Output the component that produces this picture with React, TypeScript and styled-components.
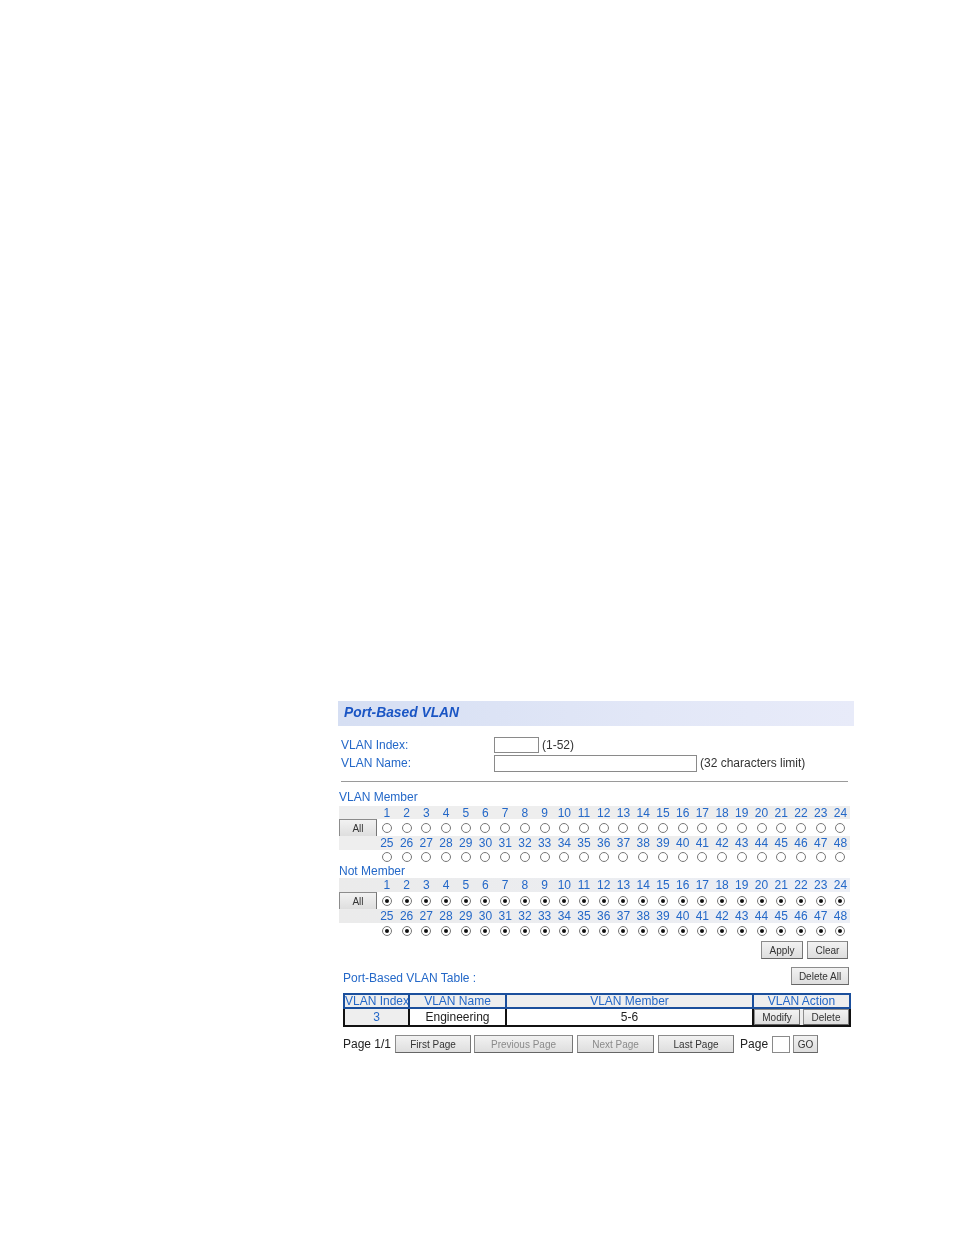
import React from 'react';
import styled, { createGlobalStyle } from 'styled-components';

const Global = createGlobalStyle`
  html, body { margin: 0; padding: 0; background: #fff; }
  body { font-family: "Liberation Sans", Arial, sans-serif; }
`;

const blue = '#2468c8';

const Page = styled.div`
  width: 954px;
  height: 1235px;
  box-sizing: border-box;
  padding: 701px 100px 0 338px;
  overflow: hidden;
`;
const Panel = styled.main`
  width: 516px;
  display: flex;
  flex-direction: column;
  filter: blur(0.3px);
`;
const TitleBar = styled.h1`
  margin: 0;
  height: 25px;
  box-sizing: border-box;
  padding: 0 0 3px 6px;
  display: flex;
  align-items: center;
  background: linear-gradient(90deg, #d6dff3 0%, #e2e7f7 60%, #e8ebf9 100%);
  color: #1a55c4;
  font-size: 13.8px;
  font-weight: bold;
  font-style: italic;
`;
const FormRow = styled.div<{ $top: number }>`
  display: flex;
  align-items: center;
  margin-top: ${p => p.$top}px;
  padding-left: 3px;
  font-size: 12px;
  height: 16px;
`;
const FieldLabel = styled.label`
  width: 153px;
  color: ${blue};
`;
const TextBox = styled.div<{ $w: number; $h: number }>`
  width: ${p => p.$w}px;
  height: ${p => p.$h}px;
  box-sizing: border-box;
  border: 1px solid #8a8a8a;
  background: #fff;
`;
const Hint = styled.span`
  margin-left: 3px;
  color: #333;
`;
const Rule = styled.hr`
  margin: 10px 6px 0 3px;
  border: 0;
  height: 1px;
  background: #9a9a9a;
`;
const SectionLabel = styled.div<{ $top: number; $after: number }>`
  margin: ${p => p.$top}px 0 ${p => p.$after}px;
  padding-left: 1px;
  height: 14px;
  line-height: 14px;
  font-size: 12px;
  color: ${blue};
`;
const PortRow = styled.div<{ $band?: boolean; $h: number; $tint?: boolean }>`
  display: grid;
  grid-template-columns: 38px repeat(24, 19.72px);
  margin-left: 1px;
  width: 511px;
  height: ${p => p.$h}px;
  align-items: center;
  background: ${p => (p.$band ? (p.$tint ? 'linear-gradient(90deg,#ebebeb,#eceff6)' : '#eeeeee') : 'transparent')};
`;
const PortNum = styled.span`
  text-align: center;
  font-size: 12px;
  color: ${blue};
`;
const RadioCell = styled.span`
  display: flex;
  justify-content: center;
`;
const Radio = styled.span<{ $on?: boolean }>`
  width: 10px;
  height: 10px;
  box-sizing: border-box;
  border: 1px solid #777;
  border-radius: 50%;
  background: #fff;
  display: flex;
  align-items: center;
  justify-content: center;
  &::after {
    content: '';
    display: ${p => (p.$on ? 'block' : 'none')};
    width: 4px;
    height: 4px;
    border-radius: 50%;
    background: #111;
  }
`;
const Btn = styled.button<{ $w: number; $h?: number; $muted?: boolean }>`
  width: ${p => p.$w}px;
  height: ${p => p.$h ?? 18}px;
  padding: 0;
  flex: none;
  border: 1px solid #8c8c8c;
  border-right-color: #777;
  border-bottom-color: #666;
  background: linear-gradient(#f2f2f2, #dedede);
  font-family: inherit;
  font-size: 10px;
  color: ${p => (p.$muted ? '#8a8a8a' : '#333')};
`;
const ApplyRow = styled.div`
  display: flex;
  justify-content: flex-end;
  gap: 4px;
  margin-top: 2px;
  padding-right: 6px;
`;
const TableHead = styled.div`
  display: flex;
  justify-content: space-between;
  align-items: flex-end;
  margin-top: 8px;
  padding: 0 5px 0 5px;
  height: 18px;
`;
const Caption = styled.span`
  font-size: 12px;
  color: ${blue};
  line-height: 13px;
`;
const Table = styled.table`
  margin: 8px 0 0 5px;
  width: 506px;
  border-collapse: collapse;
  table-layout: fixed;
  font-size: 12px;
`;
const Th = styled.th<{ $w: number }>`
  width: ${p => p.$w}px;
  box-sizing: border-box;
  height: 14px;
  line-height: 12px;
  padding: 0;
  border: 2px solid #1b4f9c;
  background: #eeeeee;
  color: ${blue};
  font-weight: normal;
  white-space: nowrap;
  overflow: hidden;
`;
const Td = styled.td<{ $tint?: boolean; $link?: boolean }>`
  height: 16px;
  line-height: 14px;
  padding: 0;
  border: 2px solid #111;
  border-top-color: #1b4f9c;
  text-align: center;
  background: ${p => (p.$tint ? '#eeeeee' : '#fff')};
  color: ${p => (p.$link ? blue : '#222')};
`;
const Actions = styled.div`
  display: flex;
  gap: 3px;
`;
const Pager = styled.div`
  display: flex;
  align-items: center;
  margin: 8px 0 0 5px;
  font-size: 12px;
  color: #222;
  height: 18px;
`;
const PagerText = styled.span<{ $l: number }>`
  margin-left: ${p => p.$l}px;
  margin-right: 4px;
`;
const PagerBtn = styled(Btn)<{ $l: number }>`
  margin-left: ${p => p.$l}px;
`;

const first = Array.from({ length: 24 }, (_, i) => i + 1);
const second = Array.from({ length: 24 }, (_, i) => i + 25);

function Ports({ on, tops }: { on?: boolean; tops: number[] }) {
  return (
    <>
      <PortRow $band $tint={on} $h={tops[0]}>
        <span />
        {first.map(n => <PortNum key={n}>{n}</PortNum>)}
      </PortRow>
      <PortRow $h={tops[1]}>
        <Btn $w={38} $h={18}>All</Btn>
        {first.map(n => <RadioCell key={n}><Radio $on={on} /></RadioCell>)}
      </PortRow>
      <PortRow $band $tint={on} $h={tops[2]}>
        <span />
        {second.map(n => <PortNum key={n}>{n}</PortNum>)}
      </PortRow>
      <PortRow $h={tops[3]}>
        <span />
        {second.map(n => <RadioCell key={n}><Radio $on={on} /></RadioCell>)}
      </PortRow>
    </>
  );
}

export default function App() {
  return (
    <Page>
      <Global />
      <Panel>
        <TitleBar>Port-Based VLAN</TitleBar>
        <FormRow $top={11}>
          <FieldLabel>VLAN Index:</FieldLabel>
          <TextBox $w={45} $h={16} />
          <Hint>(1-52)</Hint>
        </FormRow>
        <FormRow $top={2}>
          <FieldLabel>VLAN Name:</FieldLabel>
          <TextBox $w={203} $h={17} />
          <Hint>(32 characters limit)</Hint>
        </FormRow>
        <Rule />
        <SectionLabel $top={8} $after={2}>VLAN Member</SectionLabel>
        <Ports tops={[13, 17, 14, 14]} />
        <SectionLabel $top={0} $after={0}>Not Member</SectionLabel>
        <Ports on tops={[14, 17, 14, 16]} />
        <ApplyRow>
          <Btn $w={42}>Apply</Btn>
          <Btn $w={41}>Clear</Btn>
        </ApplyRow>
        <TableHead>
          <Caption>Port-Based VLAN Table :</Caption>
          <Btn $w={58}>Delete All</Btn>
        </TableHead>
        <Table>
          <thead>
            <tr>
              <Th $w={65}>VLAN Index</Th>
              <Th $w={97}>VLAN Name</Th>
              <Th $w={247}>VLAN Member</Th>
              <Th $w={97}>VLAN Action</Th>
            </tr>
          </thead>
          <tbody>
            <tr>
              <Td $tint $link>3</Td>
              <Td>Engineering</Td>
              <Td>5-6</Td>
              <Td $tint>
                <Actions>
                  <Btn $w={46} $h={16}>Modify</Btn>
                  <Btn $w={46} $h={16}>Delete</Btn>
                </Actions>
              </Td>
            </tr>
          </tbody>
        </Table>
        <Pager>
          <span>Page 1/1</span>
          <PagerBtn $l={4} $w={76}>First Page</PagerBtn>
          <PagerBtn $l={3} $w={99} $muted>Previous Page</PagerBtn>
          <PagerBtn $l={4} $w={77} $muted>Next Page</PagerBtn>
          <PagerBtn $l={4} $w={76}>Last Page</PagerBtn>
          <PagerText $l={6}>Page</PagerText>
          <TextBox $w={18} $h={17} />
          <PagerBtn $l={3} $w={25}>GO</PagerBtn>
        </Pager>
      </Panel>
    </Page>
  );
}
